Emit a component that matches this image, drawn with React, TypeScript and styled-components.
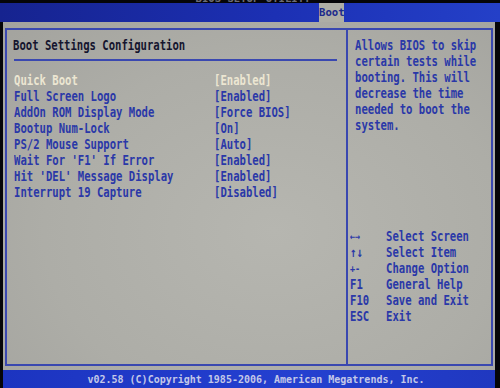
import React from "react";
import styled, { createGlobalStyle } from "styled-components";

const Global = createGlobalStyle`
  html, body { margin: 0; padding: 0; background: #050508; }
`;

const Screen = styled.div`
  width: 500px;
  height: 388px;
  background: #050508;
  display: flex;
  flex-direction: column;
  overflow: hidden;
  font-family: "DejaVu Sans Mono", "Liberation Mono", monospace;
  font-weight: bold;
  font-size: 10.6px;
`;

const TopBar = styled.div`
  height: 22px;
  display: flex;
  flex-direction: column;
`;

const TitleRow = styled.div`
  height: 3px;
  overflow: hidden;
  display: flex;
  justify-content: center;
  align-items: flex-end;
  color: rgba(200, 200, 215, 0.55);
  line-height: 9px;
  padding-left: 6px;
`;

const TabRow = styled.div`
  flex: 1;
  display: flex;
  padding-left: 319px;
  background: linear-gradient(to right, #16238f 0%, #1c30b4 55%, #2440c8 100%);
`;

const Tab = styled.div`
  width: 25px;
  background: #aeaea6;
  color: #1c2a8c;
  text-align: center;
  line-height: 19px;
`;

const Body = styled.div`
  flex: 1;
  display: flex;
  padding: 0 5px 0 3px;
`;

const Main = styled.div`
  flex: 1;
  display: flex;
  padding: 6px 2px 4px 2px;
  background: radial-gradient(ellipse at 55% 60%, #b6b6b0 0%, #adada7 60%, #a3a39e 100%);
`;

const Frame = styled.div`
  flex: 1;
  display: grid;
  grid-template-columns: 1fr 143px;
  border: 2px solid #3a48b0;
`;

const LeftPanel = styled.div`
  border-right: 2px solid #3a48b0;
  padding: 7px 9px 0 6px;
`;

const Line = styled.div<{ $color?: string }>`
  line-height: 16px;
  height: 16px;
  white-space: pre;
  color: ${(p) => p.$color ?? "#2a38a8"};
  transform: scaleY(1.28);
  transform-origin: 50% 50%;
`;

const Rule = styled.div`
  height: 2px;
  background: #3a48b0;
  margin: 6px 0 11px 1px;
`;

const SettingRow = styled.div`
  display: grid;
  grid-template-columns: 200px 1fr;
  padding-left: 1px;
`;

const RightPanel = styled.div`
  display: flex;
  flex-direction: column;
  padding: 7px 4px 40px 2px;
`;

const Help = styled.div`
  margin-left: 5px;
`;

const Legend = styled.div`
  margin-top: auto;
  display: grid;
  grid-template-columns: 36px 1fr;
`;

const KeyLine = styled(Line)<{ $small?: boolean }>`
  font-size: ${(p) => (p.$small ? "8.5px" : "10.6px")};
`;

const BottomBar = styled.div`
  height: 18px;
  margin: 0 5px 0 3px;
  background: linear-gradient(to right, #1c34c0 0%, #2440d0 60%, #2038c0 100%);
  color: #c4c8e8;
  display: flex;
  justify-content: center;
  align-items: center;
  font-size: 10px;
  padding-left: 14px;
`;

const highlight = "#ece6d2";

const settings: { label: string; value: string; active?: boolean }[] = [
  { label: "Quick Boot", value: "[Enabled]", active: true },
  { label: "Full Screen Logo", value: "[Enabled]" },
  { label: "AddOn ROM Display Mode", value: "[Force BIOS]" },
  { label: "Bootup Num-Lock", value: "[On]" },
  { label: "PS/2 Mouse Support", value: "[Auto]" },
  { label: "Wait For 'F1' If Error", value: "[Enabled]" },
  { label: "Hit 'DEL' Message Display", value: "[Enabled]" },
  { label: "Interrupt 19 Capture", value: "[Disabled]" },
];

const helpLines = [
  "Allows BIOS to skip",
  "certain tests while",
  "booting. This will",
  "decrease the time",
  "needed to boot the",
  "system.",
];

const keys: { key: string; desc: string; small?: boolean }[] = [
  { key: "←→", desc: "Select Screen", small: true },
  { key: "↑↓", desc: "Select Item" },
  { key: "+-", desc: "Change Option", small: true },
  { key: "F1", desc: "General Help" },
  { key: "F10", desc: "Save and Exit" },
  { key: "ESC", desc: "Exit" },
];

export default function App() {
  return (
    <>
      <Global />
      <Screen>
        <TopBar>
          <TitleRow>BIOS SETUP UTILITY</TitleRow>
          <TabRow>
            <Tab>Boot</Tab>
          </TabRow>
        </TopBar>
        <Body>
          <Main>
            <Frame>
              <LeftPanel>
                <Line $color="#15152e">Boot Settings Configuration</Line>
                <Rule />
                {settings.map((s) => (
                  <SettingRow key={s.label}>
                    <Line $color={s.active ? highlight : undefined}>{s.label}</Line>
                    <Line $color={s.active ? highlight : undefined}>{s.value}</Line>
                  </SettingRow>
                ))}
              </LeftPanel>
              <RightPanel>
                <Help>
                  {helpLines.map((l) => (
                    <Line key={l}>{l}</Line>
                  ))}
                </Help>
                <Legend>
                  {keys.map((k) => (
                    <React.Fragment key={k.key}>
                      <KeyLine $small={k.small}>{k.key}</KeyLine>
                      <Line>{k.desc}</Line>
                    </React.Fragment>
                  ))}
                </Legend>
              </RightPanel>
            </Frame>
          </Main>
        </Body>
        <BottomBar>v02.58 (C)Copyright 1985-2006, American Megatrends, Inc.</BottomBar>
      </Screen>
    </>
  );
}
